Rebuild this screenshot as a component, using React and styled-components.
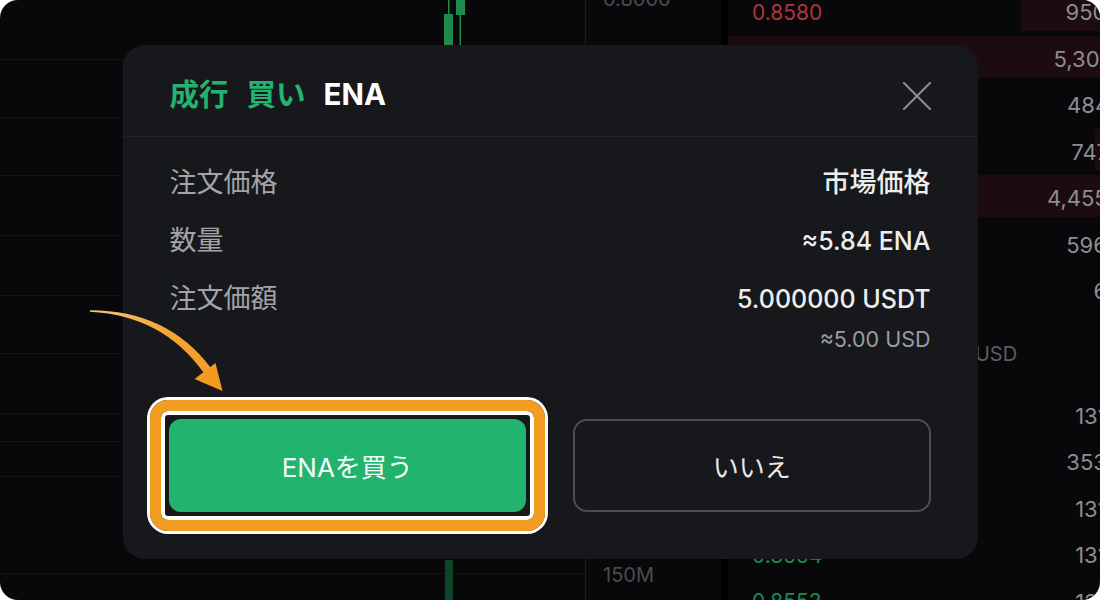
import styled, { createGlobalStyle } from "styled-components";

const GlobalStyle = createGlobalStyle`
  html, body {
    margin: 0;
    background: #ffffff;
  }
  * {
    box-sizing: border-box;
  }
`;

const FONT = `Inter, "Noto Sans CJK JP", "Noto Sans", sans-serif`;

const asks = [
  { price: "0.8580", qty: "950.43", depth: 29 },
  { price: "0.8576", qty: "5,302.18", depth: 100 },
  { price: "0.8572", qty: "484.75", depth: 0 },
  { price: "0.8570", qty: "747.90", depth: 11 },
  { price: "0.8566", qty: "4,455.62", depth: 82 },
  { price: "0.8563", qty: "596.04", depth: 0 },
  { price: "0.8560", qty: "6.54", depth: 0 },
];

const bids = [
  { price: "0.8557", qty: "131.80" },
  { price: "0.8556", qty: "353.24" },
  { price: "0.8555", qty: "131.80" },
  { price: "0.8554", qty: "131.80" },
  { price: "0.8553", qty: "131.80" },
];

const gridLines = [59, 117, 175, 235, 295, 353, 413, 441, 476, 573];

function App() {
  return (
    <>
      <GlobalStyle />
      <Frame>
        <ChartPane>
          <svg width="585" height="600" viewBox="0 0 585 600">
            {gridLines.map((y) => (
              <rect key={y} x="0" y={y} width="585" height="1" fill="#141418" />
            ))}
            <rect x="448" y="0" width="1.5" height="14" fill="#1f8a4c" />
            <rect x="444" y="14" width="9" height="50" fill="#1f8a4c" />
            <rect x="456" y="0" width="9" height="15" fill="#1f8a4c" />
            <rect x="459.5" y="15" width="1.5" height="50" fill="#1f8a4c" />
            <rect x="445" y="560" width="8" height="40" fill="#0f4428" />
          </svg>
        </ChartPane>

        <AxisPane>
          <AxisLabel $top>0.8000</AxisLabel>
          <AxisLabel>150M</AxisLabel>
        </AxisPane>

        <Divider />

        <OrderBook>
          {asks.map((a) => (
            <BookRow key={a.price}>
              {a.depth > 0 && <DepthBar style={{ width: `${a.depth}%` }} />}
              <Price $side="ask">{a.price}</Price>
              <Qty>{a.qty}</Qty>
            </BookRow>
          ))}
          <MidRow>
            <MidPrice>0.8567</MidPrice>
            <MidUsd>≈0.8567 USD</MidUsd>
          </MidRow>
          {bids.map((b) => (
            <BookRow key={b.price}>
              <Price $side="bid">{b.price}</Price>
              <Qty>{b.qty}</Qty>
            </BookRow>
          ))}
        </OrderBook>

        <Overlay>
          <Modal>
            <Header>
              <Title>
                <TitleWord $green>成行</TitleWord>
                <TitleWord $green>買い</TitleWord>
                <TitleWord>ENA</TitleWord>
              </Title>
              <CloseButton aria-label="close">
                <svg width="30" height="30" viewBox="0 0 30 30">
                  <path
                    d="M2 2 L28 28 M28 2 L2 28"
                    stroke="#8a8b90"
                    strokeWidth="2.2"
                    strokeLinecap="round"
                  />
                </svg>
              </CloseButton>
            </Header>

            <Body>
              <InfoList>
                <InfoRow>
                  <Label>注文価格</Label>
                  <ValueCol>
                    <Value $cjk>市場価格</Value>
                  </ValueCol>
                </InfoRow>
                <InfoRow>
                  <Label>数量</Label>
                  <ValueCol>
                    <Value>≈5.84 ENA</Value>
                  </ValueCol>
                </InfoRow>
                <InfoRow>
                  <Label>注文価額</Label>
                  <ValueCol>
                    <Value>5.000000 USDT</Value>
                    <SubValue>≈5.00 USD</SubValue>
                  </ValueCol>
                </InfoRow>
              </InfoList>

              <Actions>
                <BuyWrap>
                  <BuyButton>ENAを買う</BuyButton>
                  <Highlight />
                </BuyWrap>
                <CancelButton>いいえ</CancelButton>
              </Actions>
            </Body>
          </Modal>
        </Overlay>

        <Arrow width="260" height="420" viewBox="0 0 260 420">
          <defs>
            <linearGradient id="arrowGrad" x1="90" y1="310" x2="222" y2="390" gradientUnits="userSpaceOnUse">
              <stop offset="0" stopColor="#f8c46e" />
              <stop offset="0.5" stopColor="#f4a63a" />
              <stop offset="1" stopColor="#f29a22" />
            </linearGradient>
          </defs>
          <path
            d="M90 310.3 Q167 310.2 210.5 367.4 L203.5 372.6 Q163 315.5 90 311.7 Z"
            fill="url(#arrowGrad)"
          />
          <path d="M194.5 379 L215.5 363 L222.5 391 Z" fill="#f29a22" />
        </Arrow>
      </Frame>
    </>
  );
}

export default App;

const Frame = styled.div`
  position: relative;
  width: 1100px;
  height: 600px;
  border-radius: 18px;
  overflow: hidden;
  background: #08080a;
  display: grid;
  grid-template-columns: 586px 135px 7px 412px;
  grid-template-rows: 600px;
  font-family: ${FONT};
`;

const ChartPane = styled.div`
  border-right: 1px solid #1f1f23;
  overflow: hidden;
  svg {
    display: block;
  }
`;

const AxisPane = styled.div`
  display: flex;
  flex-direction: column;
  justify-content: space-between;
  padding: 0 0 13px 17px;
`;

const AxisLabel = styled.div`
  font-size: 20px;
  line-height: 24px;
  color: #4b4b50;
  margin-top: ${(p) => (p.$top ? "-13px" : "0")};
`;

const Divider = styled.div`
  background: #000000;
`;

const OrderBook = styled.div`
  min-height: 0;
  display: flex;
  flex-direction: column;
  margin-top: -11px;
`;

const BookRow = styled.div`
  position: relative;
  height: 46.5px;
  flex-shrink: 0;
  display: flex;
  align-items: center;
  justify-content: space-between;
  padding-left: 24px;
  font-size: 22px;
`;

const DepthBar = styled.div`
  position: absolute;
  right: 0;
  top: 0;
  height: 42px;
  background: #1d0c0f;
`;

const Price = styled.span`
  position: relative;
  font-size: 21px;
  color: ${(p) => (p.$side === "ask" ? "#ad373b" : "#188c4d")};
`;

const Qty = styled.span`
  position: relative;
  color: #8d8d92;
`;

const MidRow = styled.div`
  height: 78px;
  flex-shrink: 0;
  display: flex;
  align-items: center;
  padding-left: 24px;
  gap: 53px;
`;

const MidPrice = styled.span`
  font-size: 26px;
  color: #1f9a56;
`;

const MidUsd = styled.span`
  font-size: 20px;
  color: #5c5c61;
`;

const Overlay = styled.div`
  position: absolute;
  inset: 0;
  display: flex;
  justify-content: center;
  align-items: flex-start;
  padding-top: 45px;
`;

const Modal = styled.div`
  width: 855px;
  background: #17181c;
  border-radius: 22px;
`;

const Header = styled.div`
  height: 92px;
  display: flex;
  align-items: center;
  justify-content: space-between;
  padding: 6px 46px 0 47px;
  border-bottom: 1px solid #222328;
`;

const Title = styled.div`
  display: flex;
  align-items: center;
  gap: 18px;
  font-size: 29.5px;
  font-weight: 700;
  line-height: 36px;
`;

const TitleWord = styled.span`
  color: ${(p) => (p.$green ? "#22b36e" : "#ffffff")};
`;

const CloseButton = styled.button`
  width: 30px;
  height: 30px;
  padding: 0;
  margin-top: 4px;
  border: none;
  background: transparent;
  display: flex;
  align-items: center;
  justify-content: center;
  cursor: pointer;
`;

const Body = styled.div`
  padding: 28px 47px 47px 46px;
`;

const InfoList = styled.div`
  display: flex;
  flex-direction: column;
  gap: 22px;
`;

const InfoRow = styled.div`
  display: flex;
  justify-content: space-between;
  align-items: flex-start;
`;

const Label = styled.span`
  font-size: 27px;
  line-height: 36px;
  color: #a3a3a8;
  margin-left: 1px;
`;

const ValueCol = styled.div`
  display: flex;
  flex-direction: column;
  align-items: flex-end;
`;

const Value = styled.span`
  font-size: ${(p) => (p.$cjk ? "27px" : "25px")};
  line-height: 36px;
  font-weight: 500;
  color: #ededee;
`;

const SubValue = styled.span`
  margin-top: 8px;
  font-size: 21.5px;
  line-height: 28px;
  color: #9b9ba0;
`;

const Actions = styled.div`
  margin-top: 66px;
  display: grid;
  grid-template-columns: 1fr 1fr;
  gap: 47px;
`;

const BuyWrap = styled.div`
  position: relative;
`;

const BaseButton = styled.button`
  width: 100%;
  height: 93px;
  font-family: ${FONT};
  font-size: 26px;
  font-weight: 400;
  cursor: pointer;
`;

const BuyButton = styled(BaseButton)`
  border: none;
  border-radius: 12px;
  background: #22b36e;
  color: #f2fff7;
`;

const CancelButton = styled(BaseButton)`
  border: 2px solid #4b4c51;
  border-radius: 14px;
  background: transparent;
  color: #e8e8e9;
`;

const Highlight = styled.span`
  position: absolute;
  inset: -19px;
  border: 11px solid #f39c22;
  border-radius: 18px;
  box-shadow: 0 0 0 3px #ffffff, inset 0 0 0 4px #ffffff;
  pointer-events: none;
`;

const Arrow = styled.svg`
  position: absolute;
  left: 0;
  top: 0;
  pointer-events: none;
`;
